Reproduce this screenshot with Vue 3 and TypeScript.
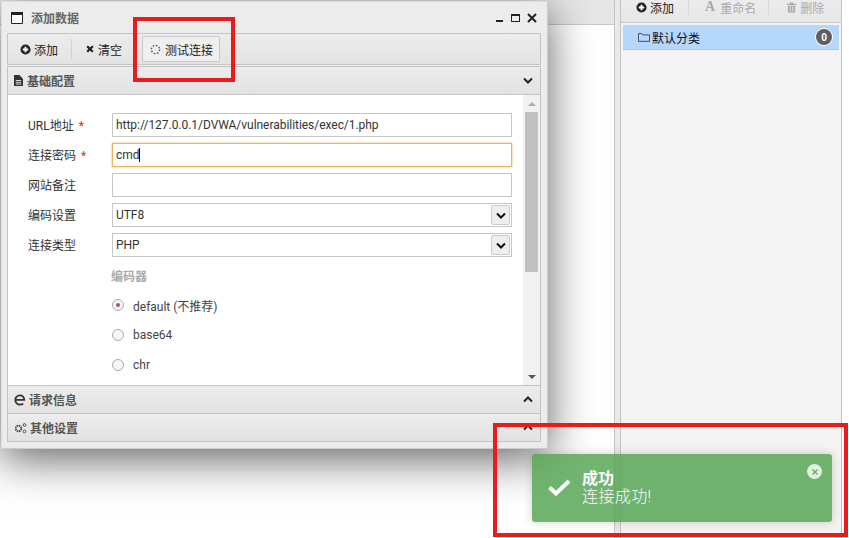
<script setup lang="ts">
const fields = [
  { label: 'URL地址', req: true, value: 'http://127.0.0.1/DVWA/vulnerabilities/exec/1.php', focus: false },
  { label: '连接密码', req: true, value: 'cmd', focus: true },
  { label: '网站备注', req: false, value: '', focus: false },
]
const selects = [
  { label: '编码设置', value: 'UTF8' },
  { label: '连接类型', value: 'PHP' },
]
const encoders = [
  { name: 'default (不推荐)', on: true },
  { name: 'base64', on: false },
  { name: 'chr', on: false },
]
</script>

<template>
  <div class="page">
    <div class="main"><div class="main-top"></div></div>
    <div class="splitter"></div>
    <div class="side">
      <div class="side-bar">
        <span class="sb-item">
          <svg class="ic" viewBox="0 0 12 12"><circle cx="6" cy="6" r="5.5" fill="#222" /><path d="M3 6h6M6 3v6" stroke="#fff" stroke-width="2" /></svg>添加
        </span>
        <span class="sb-item off"><b class="a">A</b>重命名</span>
        <span class="sb-item off">
          <svg class="ic" viewBox="0 0 12 12"><path d="M1 2h10v1.300H1zM4.300.500h3.400V2H4.300zM2 4h8v7.500H2z" fill="#aaa" /><path d="M4.500 5v5M7.500 5v5" stroke="#eee" /></svg>删除
        </span>
      </div>
      <div class="cat">
        <svg class="folder" viewBox="0 0 14 12"><path d="M.5 10.500v-9h4l1.200 1.500h7.800v7.500z" fill="none" stroke="#333" /></svg>
        <span>默认分类</span>
        <span class="badge">0</span>
      </div>
    </div>

    <section class="win">
      <header class="win-head">
        <svg class="win-ic" viewBox="0 0 12 12"><path d="M.5.500h11v11H.5z" fill="#fff" stroke="#222" /><path d="M0 0h12v3H0z" fill="#222" /></svg>
        <span class="win-title">添加数据</span>
        <span class="win-ctl">
          <i class="min"></i><i class="max"></i>
          <svg viewBox="0 0 10 10" class="close"><path d="M1 1l8 8M9 1l-8 8" stroke="#222" stroke-width="2" /></svg>
        </span>
      </header>
      <div class="tools">
        <span class="tool">
          <svg class="ic" viewBox="0 0 12 12"><circle cx="6" cy="6" r="5.500" fill="#222" /><path d="M3 6h6M6 3v6" stroke="#fff" stroke-width="2" /></svg>添加
        </span>
        <i class="sep"></i>
        <span class="tool">
          <svg class="ic x" viewBox="0 0 10 10"><path d="M1.500 1.500l7 7M8.500 1.500l-7 7" stroke="#222" stroke-width="2.800" /></svg>清空
        </span>
        <span class="tool btn">
          <svg class="ic spin" viewBox="0 0 12 12"><circle cx="6" cy="6" r="4.500" fill="none" stroke="#555" stroke-width="1.500" stroke-dasharray="1.800 1.700" /></svg>测试连接
        </span>
      </div>
      <div class="acc-head first">
        <svg class="ic file" viewBox="0 0 10 12"><path d="M0 0h6l4 4v8H0z" fill="#333" /><path d="M2 6h6M2 8h6M2 10h6" stroke="#eee" /></svg>
        <span>基础配置</span>
        <svg class="chev" viewBox="0 0 10 7"><path d="M1 1.500l4 4 4-4" fill="none" stroke="#222" stroke-width="2" /></svg>
      </div>
      <div class="acc-body">
        <div class="form">
          <div v-for="f in fields" :key="f.label" class="row">
            <label class="lab">{{ f.label }}<em v-if="f.req">*</em></label>
            <div class="input" :class="{ focus: f.focus }">{{ f.value }}<i v-if="f.focus" class="caret"></i></div>
          </div>
          <div v-for="s in selects" :key="s.label" class="row">
            <label class="lab">{{ s.label }}</label>
            <div class="input sel">
              {{ s.value }}
              <span class="sel-btn"><svg viewBox="0 0 10 7"><path d="M1 1.500l4 4 4-4" fill="none" stroke="#111" stroke-width="2" /></svg></span>
            </div>
          </div>
          <div class="enc-title">编码器</div>
          <div v-for="e in encoders" :key="e.name" class="radio">
            <span class="dot" :class="{ on: e.on }"></span>{{ e.name }}
          </div>
        </div>
        <div class="scroll">
          <i class="arr up"></i>
          <div class="track"><div class="thumb"></div></div>
          <i class="arr down"></i>
        </div>
      </div>
      <div class="acc-head">
        <svg class="ic ie" viewBox="0 0 12 12"><path d="M2 5.800h8.200C10.200 3 8.500 1.400 6 1.400 3.400 1.400 1.300 3.300 1.300 6 1.300 8.700 3.400 10.600 6 10.600 7.300 10.600 8.400 10.300 9.200 9.600" fill="none" stroke="#333" stroke-width="1.800" /></svg>
        <span>请求信息</span>
        <svg class="chev" viewBox="0 0 10 7"><path d="M1 5.500l4-4 4 4" fill="none" stroke="#222" stroke-width="2" /></svg>
      </div>
      <div class="acc-head last">
        <svg class="ic gears" viewBox="0 0 13 12"><circle cx="4.500" cy="6.500" r="2.800" fill="none" stroke="#444" stroke-width="1.800" stroke-dasharray="1.500 .7" /><circle cx="10.500" cy="3" r="1.400" fill="none" stroke="#555" /><circle cx="10.500" cy="9.500" r="1.400" fill="none" stroke="#555" /></svg>
        <span>其他设置</span>
        <svg class="chev" viewBox="0 0 10 7"><path d="M1 5.500l4-4 4 4" fill="none" stroke="#222" stroke-width="2" /></svg>
      </div>
    </section>

    <div class="toast">
      <svg class="check" viewBox="0 0 24 18"><path d="M2.500 9.500l6.500 6L22 3" fill="none" stroke="#fff" stroke-width="4" /></svg>
      <div class="toast-text">
        <div class="t1">成功</div>
        <div class="t2">连接成功!</div>
      </div>
      <span class="toast-x"><svg viewBox="0 0 8 8"><path d="M1.500 1.500l5 5M6.500 1.500l-5 5" stroke="#6fb06f" stroke-width="1.600" /></svg></span>
    </div>

    <div class="mark m1"></div>
    <div class="mark m2"></div>
  </div>
</template>

<style>
html, body { margin: 0; background: #fff; }
</style>

<style scoped>
.page {
  position: relative;
  width: 849px;
  height: 538px;
  overflow: hidden;
  display: flex;
  background: #fff;
  font: 12px Roboto, "Noto Sans CJK SC", sans-serif;
  color: #333;
}
i, em { font-style: normal; }
.main { width: 614px; flex: none; }
.main-top { height: 25px; background: #e6e6e6; border-bottom: 1px solid #c8c8c8; box-sizing: border-box; }
.splitter {
  width: 7px; flex: none; background: #e9e9e9;
  border-left: 1px solid #c4c4c4; border-right: 1px solid #c4c4c4; box-sizing: border-box;
}
.side { width: 221px; flex: none; background: #f3f3f3; border-right: 1px solid #c4c4c4; box-sizing: border-box; }
.side-bar {
  height: 23px; background: linear-gradient(#ececec, #e6e6e6); border-bottom: 1px solid #c8c8c8;
  display: flex; align-items: center; padding-left: 15px; box-sizing: border-box; color: #222; white-space: nowrap;
}
.sb-item { flex: none; display: inline-flex; align-items: center; gap: 1px; height: 17px; padding-right: 14px; margin-right: 16px; border-right: 1px solid #d2dadd; position: relative; top: -4px; }
.sb-item:nth-child(2) { padding-right: 12px; margin-right: 17px; }
.sb-item:last-child { border: 0; }
.sb-item.off { color: #aaa; }
.a { font: bold 14px "Liberation Serif", serif; color: #aaa; margin-right: 4px; }
.ic { width: 11px; height: 11px; flex: none; margin-right: 2px; }
.cat {
  margin: 2px 2px 0 2px; height: 25px; background: #b5d6fd; border-bottom: 1px solid #c2c2c2;
  display: flex; align-items: center; padding-left: 15px; gap: 2px; box-sizing: border-box; color: #111;
}
.folder { width: 12px; height: 11px; }
.badge {
  margin-left: auto; margin-right: 7px; width: 16px; height: 16px; border-radius: 50%; background: #5f5f5f; color: #fff;
  font-size: 10px; font-weight: 700; display: flex; align-items: center; justify-content: center; box-shadow: 0 0 0 1px #fff;
}

.win {
  position: absolute; left: 1px; top: 1px; width: 547px; height: 448px; box-sizing: border-box;
  background: #ececec; border: 1px solid #ddd; border-right-color: #ccc; border-bottom-color: #ccc;
  box-shadow: 0 10px 42px rgba(0, 0, 0, 0.62);
  display: flex; flex-direction: column; padding: 0 6px 6px 5px;
}
.win-head { height: 31px; flex: none; display: flex; align-items: center; margin-left: 4px; box-sizing: border-box; }
.win-ic { width: 12px; height: 12px; margin-right: 8px; }
.win-title { font-weight: 700; color: #666; font-size: 12px; }
.win-ctl { margin-left: auto; display: flex; align-items: center; gap: 7px; padding-right: 4px; }
.min { width: 7px; height: 2px; background: #222; margin-top: 6px; margin-right: 1px; }
.max { width: 7px; height: 5px; border: 1px solid #222; border-top-width: 2px; }
.close { width: 10px; height: 10px; }
.tools {
  height: 32px; flex: none; box-sizing: border-box; border: 1px solid #c4c4c4;
  background: linear-gradient(#ececec, #e3e3e3); display: flex; align-items: center; padding-left: 12px;
}
.tool { display: inline-flex; align-items: center; color: #222; gap: 1px; }
.sep { width: 1px; height: 20px; background: #cfd6d8; margin: 0 14px 0 13px; }
.ic.x { width: 8px; height: 8px; margin-right: 3px; }
.btn {
  height: 26px; margin-left: 20px; padding: 0 6px 0 7px; box-sizing: border-box; border: 1px solid #c8c8c8; border-radius: 2px;
  background: #efefef;
}
.ic.spin { margin-right: 3px; }
.acc-head {
  height: 28px; flex: none; box-sizing: border-box; border: 1px solid #c4c4c4; border-top: 0;
  background: linear-gradient(#ececec, #e2e2e2); display: flex; align-items: center; padding: 0 7px 0 6px;
  font-weight: 700; color: #555; font-size: 12px;
}
.acc-head.first { margin-top: 1px; border-top: 1px solid #c4c4c4; height: 29px; }
.acc-head .chev { margin-left: auto; width: 10px; height: 7px; }
.acc-head .ic { margin-right: 4px; }
.acc-head .ic.file { width: 9px; margin-right: 4px; }
.acc-head .ic.ie { width: 12px; height: 12px; margin-right: 3px; }
.acc-head .ic.gears { width: 13px; height: 12px; margin-right: 3px; }
.acc-body {
  flex: 1; min-height: 0; background: #fff; border-left: 1px solid #c4c4c4; border-right: 1px solid #c4c4c4;
  border-bottom: 1px solid #c4c4c4; display: flex; overflow: hidden;
}
.form { flex: 1; padding: 18px 11px 0 20px; min-width: 0; }
.row { display: flex; align-items: center; height: 24px; margin-bottom: 6px; }
.lab { width: 84px; flex: none; color: #333; padding-bottom: 2px; }
.lab em { color: #e22; margin-left: 5px; }
.input {
  flex: 1; height: 24px; box-sizing: border-box; border: 1px solid #c6c6c6; padding: 0 3px; line-height: 22px; color: #333;
  position: relative; background: #fff; white-space: nowrap; letter-spacing: -0.04px;
}
.input.focus { border-color: #e8b45e; box-shadow: 0 0 2px #e8b45e; }
.caret { display: inline-block; width: 1px; height: 14px; background: #000; vertical-align: -3px; }
.sel-btn {
  position: absolute; right: 1px; top: 1px; width: 19px; height: 20px; box-sizing: border-box;
  border: 1px solid #ccc; background: #eee; border-radius: 2px; display: flex; align-items: center; justify-content: center;
}
.sel-btn svg { width: 10px; height: 7px; }
.enc-title { margin: 10px 0 0 83px; height: 23px; font-weight: 700; color: #aaa; }
.radio { margin-left: 84px; height: 30px; display: flex; align-items: center; color: #444; gap: 9px; }
.dot { width: 10px; height: 10px; border-radius: 50%; border: 1px solid #aaa; background: #f6f6f6; position: relative; }
.dot.on::after { content: ""; position: absolute; left: 3px; top: 3px; width: 4px; height: 4px; border-radius: 50%; background: #a55; }
.scroll { width: 17px; flex: none; background: #f1f1f1; display: flex; flex-direction: column; align-items: center; }
.arr { width: 0; height: 0; border-left: 4px solid transparent; border-right: 4px solid transparent; margin: 7px 0 6px; }
.arr.up { border-bottom: 4px solid #aaa; }
.arr.down { border-top: 4px solid #555; margin: 4px 0 6px; }
.track { flex: 1; width: 13px; }
.thumb { height: 160px; background: #c1c1c1; }

.toast {
  position: absolute; left: 532px; top: 454px; width: 300px; height: 68px; box-sizing: border-box;
  background: rgba(81, 163, 81, 0.82); border-radius: 3px; box-shadow: 0 0 10px rgba(0, 0, 0, 0.18);
  display: flex; align-items: center; color: #fff; padding-left: 15px;
}
.check { width: 24px; height: 18px; margin-right: 11px; margin-bottom: 2px; }
.toast-text { line-height: 18px; font-size: 16px; font-weight: 300; }
.t1 { font-weight: 700; }
.t2 { letter-spacing: 0.4px; }
.toast-x {
  position: absolute; right: 10px; top: 10px; width: 15px; height: 15px; border-radius: 50%; background: rgba(255,255,255,.8);
  display: flex; align-items: center; justify-content: center;
}
.toast-x svg { width: 8px; height: 8px; }

.mark { position: absolute; border: 4px solid #e81c1c; box-sizing: border-box; }
.m1 { left: 133px; top: 17px; width: 102px; height: 65px; }
.m2 { left: 493px; top: 423px; width: 355px; height: 114px; }
</style>
